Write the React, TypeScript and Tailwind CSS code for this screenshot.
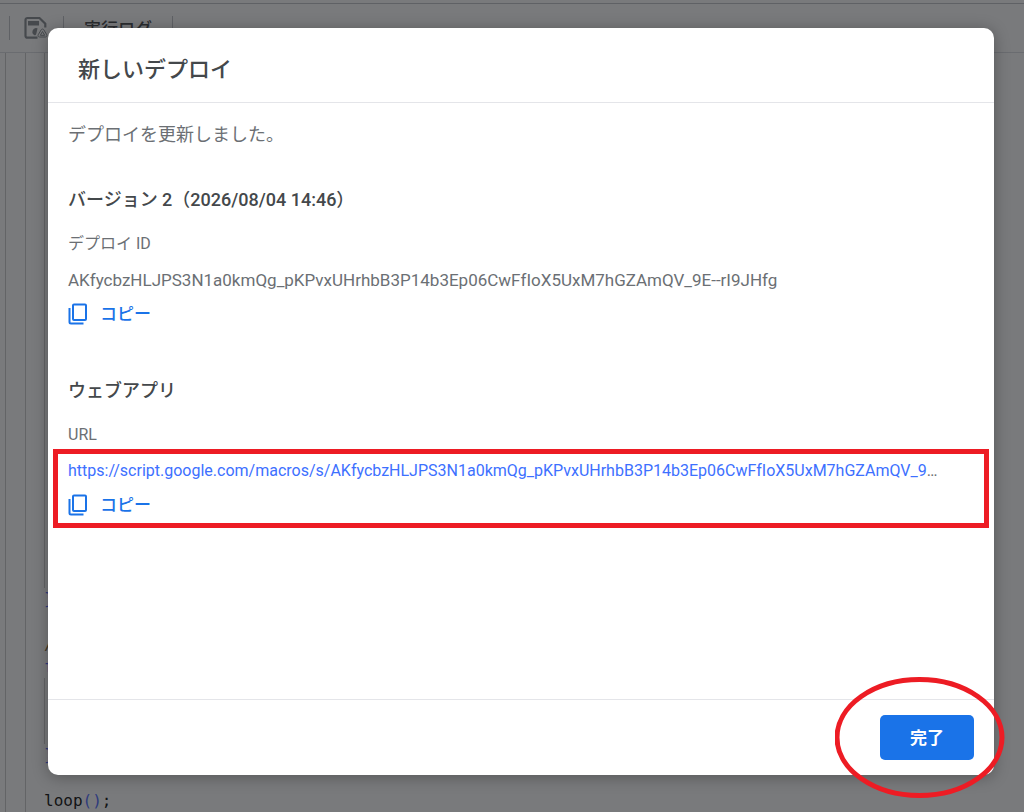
import React from 'react';

const deployId = 'AKfycbzHLJPS3N1a0kmQg_pKPvxUHrhbB3P14b3Ep06CwFfIoX5UxM7hGZAmQV_9E--rI9JHfg';
const webAppUrl = `https://script.google.com/macros/s/${deployId}/exec`;
const shortUrl = webAppUrl.slice(0, webAppUrl.indexOf('E--'));

const SaveIcon = () => (
  <svg className="w-6 h-6" viewBox="0 0 24 24" fill="none">
    <path
      d="M13.500 21.700H3.500a2 2 0 0 1-2-2V4a2 2 0 0 1 2-2H15.500l5.800 5.800V11.500"
      stroke="#80868b"
      strokeWidth="2.200"
    />
    <path d="M4 5h11v4.500H4z" fill="#80868b" />
    <path d="M13.500 12.200a3.800 3.800 0 0 0-2.500 7.200c.8-.2 1.200-1 1.400-1.800.5-2 .8-3.600 1.100-5.400z" fill="#80868b" />
    <path
      d="M18.500 13c.6 0 1 .3 1.300.8l3 5c.5 1-.1 2.200-1.300 2.200h-6c-1.200 0-1.800-1.200-1.300-2.200l3-5c.3-.5.700-.8 1.300-.8z"
      stroke="#80868b"
      strokeWidth="1"
    />
    <path d="M18.500 15.500l2.200 3.800h-4.400z" stroke="#80868b" strokeWidth="1" />
  </svg>
);

const CopyIcon = () => (
  <svg className="w-5 h-6" viewBox="0 0 20 24" fill="none" stroke="currentColor" strokeWidth="2">
    <rect x="5" y="2.500" width="13" height="15.500" rx="1" />
    <path d="M1.500 6v14a1.500 1.500 0 0 0 1.500 1.500h12.500" />
  </svg>
);

const CopyButton = () => (
  <button
    type="button"
    className="mt-[10px] flex items-center gap-3 text-[17px] leading-6 font-medium text-[#1a73e8]"
  >
    <CopyIcon />
    コピー
  </button>
);

const Toolbar = () => (
  <div className="h-[53px] shrink-0 border-b border-[#dadce0] flex flex-col">
    <div className="h-1 border-b border-[#bdc1c6]" />
    <div className="flex-1 flex items-center pl-[9px]">
      <div className="h-6 w-px bg-[#bdc1c6]" />
      <button type="button" aria-label="保存" className="ml-[14px]">
        <SaveIcon />
      </button>
      <div className="ml-[15px] h-6 w-px bg-[#bdc1c6]" />
      <button type="button" className="px-5 pt-0.5 text-[17px] leading-6 font-medium text-[#3c4043]">
        実行ログ
      </button>
      <div className="h-6 w-px bg-[#bdc1c6]" />
    </div>
  </div>
);

const Editor = () => (
  <div className="flex-1 flex pl-[5px]">
    <div className="w-5 border-l border-[#c8c8c8]" />
    <div className="w-5 border-l border-[#c8c8c8]" />
    <div className="flex-1 flex flex-col -ml-px font-['DejaVu_Sans_Mono','Liberation_Mono',monospace] text-[16px] leading-[22px] text-black whitespace-pre">
      <div className="flex-1 border-l border-[#c8c8c8]" />
      <div className="text-[#4664ff]">{'}'}</div>
      <div className="h-6" />
      <div className="text-[#795e26]">{'//'}</div>
      <div className="text-[#4664ff]">function</div>
      <div className="h-[66px] border-l border-[#c8c8c8]" />
      <div className="text-[#4664ff]">{'}'}</div>
      <div className="h-6" />
      <div>
        loop<span className="text-[#4664ff]">()</span>;
      </div>
    </div>
  </div>
);

const DeployDialog = () => (
  <div
    role="dialog"
    aria-labelledby="deploy-title"
    className="flex-1 min-w-0 flex flex-col bg-white rounded-[10px] shadow-[0_2px_16px_rgba(0,0,0,0.3)]"
  >
    <header className="h-[75px] px-[30px] pt-[10px] flex items-center border-b border-[#e4e5e9]">
      <h1 id="deploy-title" className="text-[22px] leading-8 font-medium text-[#44484b]">
        新しいデプロイ
      </h1>
    </header>

    <main className="flex-1 px-5 pt-5 text-[16px] leading-6 text-[#6b6f74]">
      <p className="text-[18px] leading-6">デプロイを更新しました。</p>

      <section className="mt-[41px]">
        <h2 className="text-[18px] leading-6 font-medium text-[#44484b]">バージョン 2（2026/08/04 14:46）</h2>
        <p className="mt-5">デプロイ ID</p>
        <p className="mt-3 text-[17px] leading-6">{deployId}</p>
        <CopyButton />
      </section>

      <section className="mt-[53px]">
        <h2 className="text-[18px] leading-6 font-medium text-[#44484b]">ウェブアプリ</h2>
        <p className="mt-5">URL</p>
        <div className="relative mt-3">
          <p>
            <a href={webAppUrl} className="text-[#3d70ff]">
              {shortUrl}
            </a>
            …
          </p>
          <CopyButton />
          <div className="absolute -inset-x-[15px] -top-[10px] -bottom-[11px] border-[5px] border-[#ed1c24] pointer-events-none" />
        </div>
      </section>
    </main>

    <footer className="px-5 py-[15px] flex justify-end border-t border-[#e4e5e9]">
      <div className="relative">
        <button
          type="button"
          className="h-[45px] px-[30px] rounded-[5px] bg-[#1a73e8] text-[17px] leading-6 font-bold text-white"
        >
          完了
        </button>
        <svg
          className="absolute -left-[45px] -top-[38px] w-[170px] h-[121px] max-w-none pointer-events-none"
          viewBox="0 0 170 121"
          fill="none"
        >
          <ellipse cx="84.500" cy="60.500" rx="82.500" ry="58" stroke="#ed1c24" strokeWidth="5" />
        </svg>
      </div>
    </footer>
  </div>
);

export default function App() {
  return (
    <div
      lang="ja"
      className="relative min-h-screen flex flex-col bg-white overflow-hidden font-['Roboto','Noto_Sans_CJK_JP',sans-serif]"
    >
      <Toolbar />
      <Editor />
      <div className="absolute inset-0 flex pl-12 pr-[30px] pt-7 pb-[37px] bg-[#202124]/60">
        <DeployDialog />
      </div>
    </div>
  );
}
